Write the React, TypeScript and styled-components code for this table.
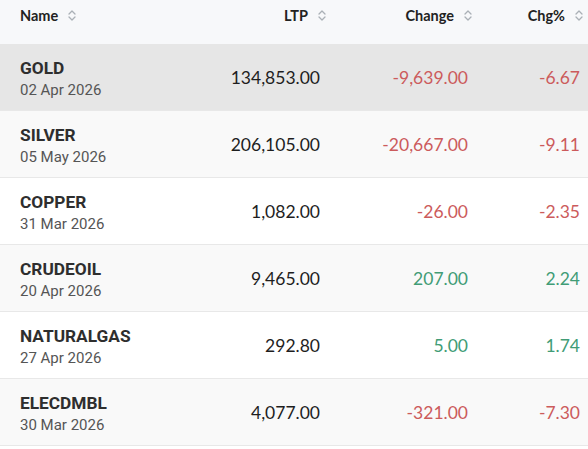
import * as React from "react";
import styled, { createGlobalStyle } from "styled-components";

interface Quote {
  symbol: string;
  expiry: string;
  ltp: string;
  change: string;
  pct: string;
}

const quotes: Quote[] = [
  { symbol: "GOLD", expiry: "02 Apr 2026", ltp: "134,853.00", change: "-9,639.00", pct: "-6.67" },
  { symbol: "SILVER", expiry: "05 May 2026", ltp: "206,105.00", change: "-20,667.00", pct: "-9.11" },
  { symbol: "COPPER", expiry: "31 Mar 2026", ltp: "1,082.00", change: "-26.00", pct: "-2.35" },
  { symbol: "CRUDEOIL", expiry: "20 Apr 2026", ltp: "9,465.00", change: "207.00", pct: "2.24" },
  { symbol: "NATURALGAS", expiry: "27 Apr 2026", ltp: "292.80", change: "5.00", pct: "1.74" },
  { symbol: "ELECDMBL", expiry: "30 Mar 2026", ltp: "4,077.00", change: "-321.00", pct: "-7.30" }
];

const GlobalStyle = createGlobalStyle`
  body {
    margin: 0;
    background: #fff;
    font-family: "Lato", "Roboto", sans-serif;
  }
`;

const Table = styled.div`
  width: 588px;
  display: flex;
  flex-direction: column;
`;

const Row = styled.div<{ $bg: string }>`
  display: grid;
  grid-template-columns: 1fr 138px 146px 112px;
  align-items: center;
  height: 66px;
  background: ${(p) => p.$bg};
  border-bottom: 1px solid #e8e8e8;
`;

const HeaderRow = styled.div`
  display: grid;
  grid-template-columns: 1fr 138px 146px 112px;
  align-items: start;
  height: 44px;
  padding-top: 5px;
  box-sizing: border-box;
  background: #f7f8fa;
`;

const HeaderCell = styled.div<{ $right?: boolean; $pad?: number }>`
  display: flex;
  align-items: center;
  justify-content: ${(p) => (p.$right ? "flex-end" : "flex-start")};
  gap: 10px;
  height: 20px;
  padding-left: ${(p) => (p.$right ? 0 : 20)}px;
  padding-right: ${(p) => p.$pad ?? 0}px;
  font-size: 14.5px;
  font-weight: 700;
  color: #222;
`;

const NameCell = styled.div`
  display: flex;
  flex-direction: column;
  padding: 4px 0 0 20px;
  font-family: "Roboto", sans-serif;
`;

const Symbol = styled.span`
  font-size: 17.3px;
  font-weight: 700;
  line-height: 22px;
  color: #2e2e2e;
`;

const Expiry = styled.span`
  font-size: 15px;
  line-height: 22px;
  color: #555;
`;

const Value = styled.div<{ $tone?: "up" | "down"; $pad: number }>`
  text-align: right;
  padding-right: ${(p) => p.$pad}px;
  font-size: 17.5px;
  color: ${(p) =>
    p.$tone === "up" ? "#419c76" : p.$tone === "down" ? "#cc5b5c" : "#1e1e1e"};
`;

const SortIcon = () => (
  <svg width="8" height="11" viewBox="0 0 8 11" fill="none">
    <path
      d="M1 4 L4 1 L7 4 M1 7 L4 10 L7 7"
      stroke="#aab0b6"
      strokeWidth="1.3"
      strokeLinecap="round"
      strokeLinejoin="round"
    />
  </svg>
);

const tone = (v: string) => (v.startsWith("-") ? "down" : "up");

const App = () => (
  <>
    <GlobalStyle />
    <Table>
      <HeaderRow>
        <HeaderCell>
          Name <SortIcon />
        </HeaderCell>
        <HeaderCell $right $pad={4}>
          LTP <SortIcon />
        </HeaderCell>
        <HeaderCell $right $pad={4}>
          Change <SortIcon />
        </HeaderCell>
        <HeaderCell $right $pad={5}>
          Chg% <SortIcon />
        </HeaderCell>
      </HeaderRow>
      {quotes.map((q, i) => (
        <Row key={q.symbol} $bg={i === 0 ? "#e6e6e6" : i % 2 === 1 ? "#f9f9f9" : "#fff"}>
          <NameCell>
            <Symbol>{q.symbol}</Symbol>
            <Expiry>{q.expiry}</Expiry>
          </NameCell>
          <Value $pad={10}>{q.ltp}</Value>
          <Value $pad={8} $tone={tone(q.change)}>
            {q.change}
          </Value>
          <Value $pad={8} $tone={tone(q.pct)}>
            {q.pct}
          </Value>
        </Row>
      ))}
    </Table>
  </>
);

export default App;
